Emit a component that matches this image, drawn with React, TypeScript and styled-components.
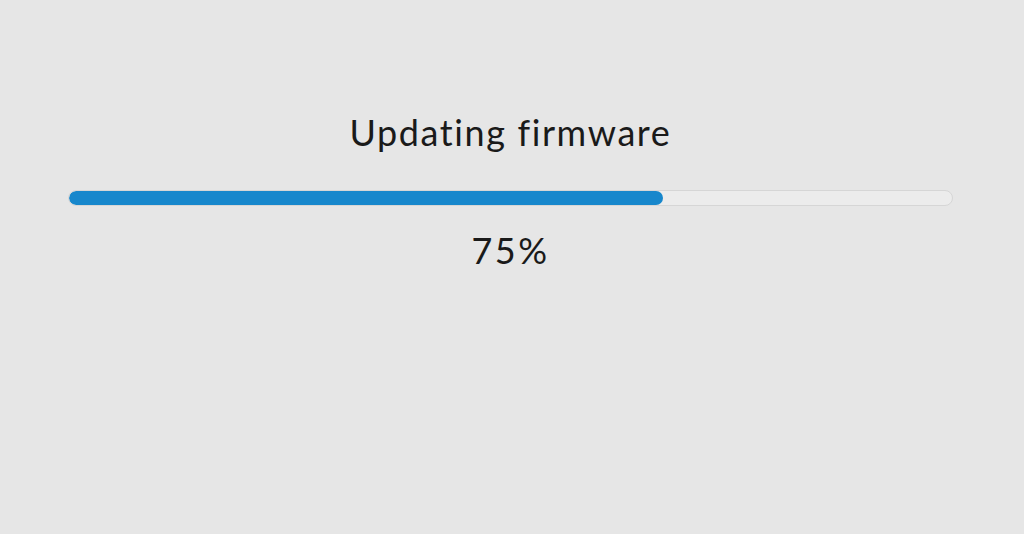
import * as React from "react"
import styled, { createGlobalStyle } from "styled-components"

const GlobalStyle = createGlobalStyle`
  html, body {
    margin: 0;
    padding: 0;
    background: #e6e6e6;
  }
`

const Screen = styled.div`
  width: 100%;
  height: 100vh;
  background: #e6e6e6;
  display: flex;
  flex-direction: column;
  align-items: center;
  padding: 109px 71px 0 68px;
  box-sizing: border-box;
  font-family: Lato, "Open Sans", sans-serif;
  color: #1a1a1a;
`

const Title = styled.div`
  font-size: 36px;
  font-weight: 400;
  line-height: 46px;
  letter-spacing: 1.6px;
`

const Track = styled.div`
  width: 100%;
  height: 16px;
  margin-top: 35px;
  border-radius: 8px;
  background: #ececec;
  border: 1px solid #d6d6d6;
  box-sizing: border-box;
  overflow: hidden;
`

const Fill = styled.div`
  height: 100%;
  background: #1787cc;
  border-radius: 8px;
`

const Percent = styled.div`
  font-size: 36px;
  line-height: 46px;
  margin-top: 21px;
  letter-spacing: 2.4px;
`

export default function App() {
  const progress = 75
  const drawn = 0.673
  return (
    <>
      <GlobalStyle />
      <Screen>
        <Title>Updating firmware</Title>
        <Track>
          <Fill style={{ width: `${drawn * 100}%` }} />
        </Track>
        <Percent>{progress}%</Percent>
      </Screen>
    </>
  )
}
